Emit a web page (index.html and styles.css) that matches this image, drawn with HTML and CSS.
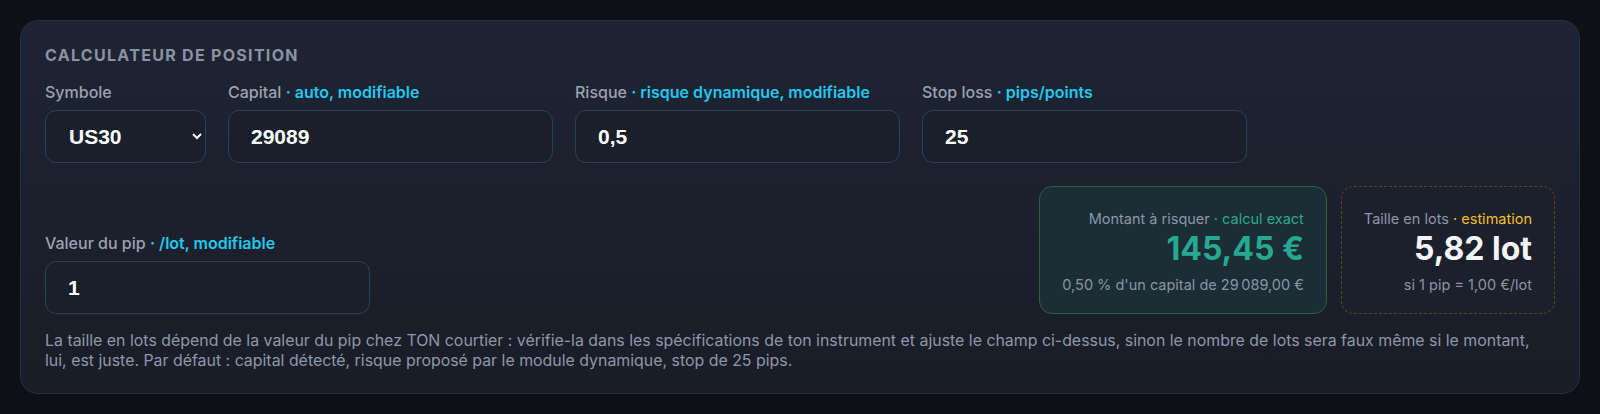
FILE: index.html
```html
<!DOCTYPE html>
<html lang="fr">
<head>
<meta charset="utf-8">
<title>Calculateur de position</title>
<link rel="stylesheet" href="styles.css">
</head>
<body>
<section class="card">
  <h2 class="title">CALCULATEUR DE POSITION</h2>
  <div class="fields">
    <div class="field field-sym">
      <label class="label">Symbole</label>
      <select class="control select">
        <option>US30</option>
      </select>
    </div>
    <div class="field">
      <label class="label">Capital <span class="hint">· auto, modifiable</span></label>
      <input class="control" type="text" value="29089">
    </div>
    <div class="field">
      <label class="label">Risque <span class="hint">· risque dynamique, modifiable</span></label>
      <input class="control" type="text" value="0,5">
    </div>
    <div class="field">
      <label class="label">Stop loss <span class="hint">· pips/points</span></label>
      <input class="control" type="text" value="25">
    </div>
    <div class="field">
      <label class="label">Valeur du pip <span class="hint">· /lot, modifiable</span></label>
      <input class="control" type="text" value="1">
    </div>
    <div class="results">
      <div class="box box-amount">
        <div class="box-label">Montant à risquer <span class="exact">· calcul exact</span></div>
        <div class="box-value value-green">145,45 €</div>
        <div class="box-sub">0,50 % d'un capital de 29&#8239;089,00 €</div>
      </div>
      <div class="box box-lots">
        <div class="box-label">Taille en lots <span class="estim">· estimation</span></div>
        <div class="box-value value-white">5,82 lot</div>
        <div class="box-sub">si 1 pip = 1,00 €/lot</div>
      </div>
    </div>
  </div>
  <p class="note">La taille en lots dépend de la valeur du pip chez TON courtier : vérifie-la dans les spécifications de ton instrument et ajuste le champ ci-dessus, sinon le nombre de lots sera faux même si le montant, lui, est juste. Par défaut : capital détecté, risque proposé par le module dynamique, stop de 25 pips.</p>
</section>
</body>
</html>
```

FILE: styles.css
```css
* { box-sizing: border-box; }
html, body { margin: 0; }
body {
  background: #0d1016;
  padding: 20px;
  font-family: Inter, "Noto Sans", sans-serif;
  color: #e5e9f0;
}
.card {
  background: linear-gradient(180deg, #1e2433 0%, #191d27 100%);
  border: 1px solid #283040;
  border-radius: 18px;
  padding: 24px;
  height: 374px;
}
.title {
  margin: 0 0 17px 0;
  font-size: 16px;
  line-height: 20px;
  font-weight: 700;
  letter-spacing: 1.3px;
  color: #8a93a3;
}
.fields {
  display: flex;
  flex-wrap: wrap;
  align-items: flex-end;
  gap: 23px 22px;
}
.field {
  display: flex;
  flex-direction: column;
  width: 325px;
}
.field-sym { width: 161px; }
.label {
  font-size: 16px;
  line-height: 20px;
  font-weight: 500;
  color: #9aa3b2;
  margin-bottom: 8px;
}
.hint {
  color: #1fc8f0;
  font-weight: 600;
}
.control {
  height: 53px;
  width: 100%;
  background: #1a1f2c;
  border: 1px solid #2f4055;
  border-radius: 11px;
  padding: 0 20px 0 22px;
  font-family: "Liberation Sans", Arial, sans-serif;
  font-size: 21px;
  font-weight: 700;
  color: #ffffff;
  outline: none;
}
.select {
  padding: 0 2px 0 19px;
  color-scheme: dark;
}
.results {
  margin-left: auto;
  display: flex;
  gap: 14px;
}
.box {
  height: 128px;
  border-radius: 13px;
  padding: 0 22px;
  display: flex;
  flex-direction: column;
  justify-content: center;
  align-items: flex-end;
  text-align: right;
}
.box-amount {
  background: #1b2d35;
  border: 1px solid #2d5f4a;
}
.box-lots {
  background: #1b202c;
  border: 1px dashed #574821;
}
.box-label {
  font-size: 14.5px;
  line-height: 20px;
  color: #8d97a8;
  margin-top: 4px;
}
.exact { color: #2aa892; }
.estim { color: #f4bf26; }
.box-value {
  font-size: 32px;
  line-height: 38px;
  font-weight: 700;
  margin-top: 1px;
}
.value-green { color: #27a892; }
.value-white { color: #f3f5f8; }
.box-sub {
  margin-top: 7px;
  font-size: 14.5px;
  line-height: 20px;
  color: #8a94a6;
}
.note {
  margin: 17px 0 0 0;
  font-size: 15.9px;
  line-height: 20px;
  color: #8e97a8;
}
```
